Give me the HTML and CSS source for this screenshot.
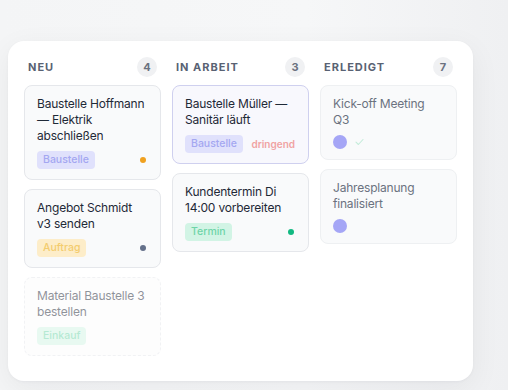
FILE: index.html
```html
<!DOCTYPE html>
<html lang="de">
  <head>
    <meta charset="UTF-8" />
    <meta name="viewport" content="width=device-width, initial-scale=1.0" />
    <title>Board</title>
    <link rel="stylesheet" href="styles.css">
  </head>
  <body>
    <div class="board">
      <!-- Neu -->
      <div class="column">
        <div class="column-head">
          <span class="column-title">Neu</span>
          <span class="count">4</span>
        </div>
        <div class="card">
          <div class="card-title">Baustelle Hoffmann — Elektrik abschließen</div>
          <div class="card-foot">
            <span class="tag tag-site">Baustelle</span>
            <span class="dot dot-amber"></span>
          </div>
        </div>
        <div class="card">
          <div class="card-title">Angebot Schmidt v3 senden</div>
          <div class="card-foot">
            <span class="tag tag-order">Auftrag</span>
            <span class="dot dot-slate"></span>
          </div>
        </div>
        <div class="card card-ghost">
          <div class="card-title">Material Baustelle 3 bestellen</div>
          <div class="card-foot">
            <span class="tag tag-buy">Einkauf</span>
          </div>
        </div>
      </div>

      <!-- In Arbeit -->
      <div class="column">
        <div class="column-head">
          <span class="column-title">In Arbeit</span>
          <span class="count">3</span>
        </div>
        <div class="card card-active">
          <div class="card-title">Baustelle Müller — Sanitär läuft</div>
          <div class="card-foot">
            <span class="tag tag-site">Baustelle</span>
            <span class="urgent">dringend</span>
          </div>
        </div>
        <div class="card">
          <div class="card-title">Kundentermin Di 14:00 vorbereiten</div>
          <div class="card-foot">
            <span class="tag tag-date">Termin</span>
            <span class="dot dot-green"></span>
          </div>
        </div>
      </div>

      <!-- Erledigt -->
      <div class="column">
        <div class="column-head">
          <span class="column-title">Erledigt</span>
          <span class="count">7</span>
        </div>
        <div class="card card-done">
          <div class="card-title">Kick-off Meeting Q3</div>
          <div class="card-foot card-foot-done">
            <span class="avatar"></span>
            <svg class="check" width="9" height="8" viewBox="0 0 9 8">
              <path d="M1 4.2 L3.4 6.5 L8 1.5" fill="none" stroke="#c4ecda" stroke-width="1.1" stroke-linecap="round" stroke-linejoin="round"/>
            </svg>
          </div>
        </div>
        <div class="card card-done">
          <div class="card-title">Jahresplanung finalisiert</div>
          <div class="card-foot card-foot-done">
            <span class="avatar"></span>
          </div>
        </div>
      </div>
    </div>
  </body>
</html>
```

FILE: styles.css
```css
html,
body {
  height: 100%;
}

body {
  margin: 0;
  font-family: Inter, "Noto Sans", sans-serif;
  background: linear-gradient(90deg, #f4f5f6 0%, #f6f7f8 60%, #eff0f2 100%);
  padding: 41px 0 0 8px;
  box-sizing: border-box;
}

.board {
  width: 465px;
  height: 340px;
  box-sizing: border-box;
  background: #fff;
  border-radius: 16px;
  padding: 16px;
  display: grid;
  grid-template-columns: repeat(3, 1fr);
  gap: 11px;
  align-items: start;
  box-shadow: 0 8px 30px rgba(17, 24, 39, 0.06), 0 1px 3px rgba(17, 24, 39, 0.04);
}

.column {
  display: flex;
  flex-direction: column;
  gap: 9px;
}

.column-head {
  display: flex;
  align-items: center;
  justify-content: space-between;
  height: 20px;
  padding: 0 4px;
  margin-bottom: -1px;
}

.column-title {
  font-size: 11px;
  font-weight: 700;
  letter-spacing: 1px;
  text-transform: uppercase;
  color: #596273;
}

.count {
  width: 20px;
  height: 20px;
  border-radius: 50%;
  background: #f0f1f3;
  color: #6b7280;
  font-size: 11px;
  font-weight: 700;
  display: flex;
  align-items: center;
  justify-content: center;
}

.card {
  background: #f9fafb;
  border: 1px solid #e5e7eb;
  border-radius: 8px;
  padding: 10px 12px;
  display: flex;
  flex-direction: column;
  gap: 7px;
}

.card-title {
  font-size: 12px;
  line-height: 16px;
  letter-spacing: -0.2px;
  color: #1f2937;
}

.card-foot {
  display: flex;
  align-items: center;
  justify-content: space-between;
  height: 18px;
}

.tag {
  height: 18px;
  line-height: 18px;
  padding: 0 6px;
  border-radius: 4px;
  font-size: 10.5px;
  font-weight: 500;
}

.tag-site {
  background: #e0e1fc;
  color: #a4a7f1;
}

.tag-order {
  background: #fdedc9;
  color: #f3cc6e;
}

.tag-date {
  background: #d2f4e5;
  color: #6ed4a8;
}

.tag-buy {
  background: #d2f4e5;
  color: #6ed4a8;
}

.dot {
  width: 6px;
  height: 6px;
  border-radius: 50%;
  margin-right: 2px;
}

.dot-amber {
  background: #f0a11f;
}

.dot-slate {
  background: #64708a;
}

.dot-green {
  background: #12b981;
}

.urgent {
  font-size: 10px;
  font-weight: 600;
  color: #f0a3a3;
  margin-right: 1px;
}

.card-active {
  background: #f8f8fd;
  border-color: #cfd0ef;
}

.card-ghost {
  border-style: dashed;
  background: #fcfcfd;
  opacity: 0.5;
}

.card-done {
  background: #f9fafb;
  border-color: #eef0f2;
}

.card-done .card-title {
  color: #6b7280;
  padding-right: 6px;
}

.card-foot-done {
  justify-content: flex-start;
  gap: 8px;
  height: 14px;
}

.avatar {
  width: 14px;
  height: 14px;
  border-radius: 50%;
  background: #a5a6f6;
}
```
